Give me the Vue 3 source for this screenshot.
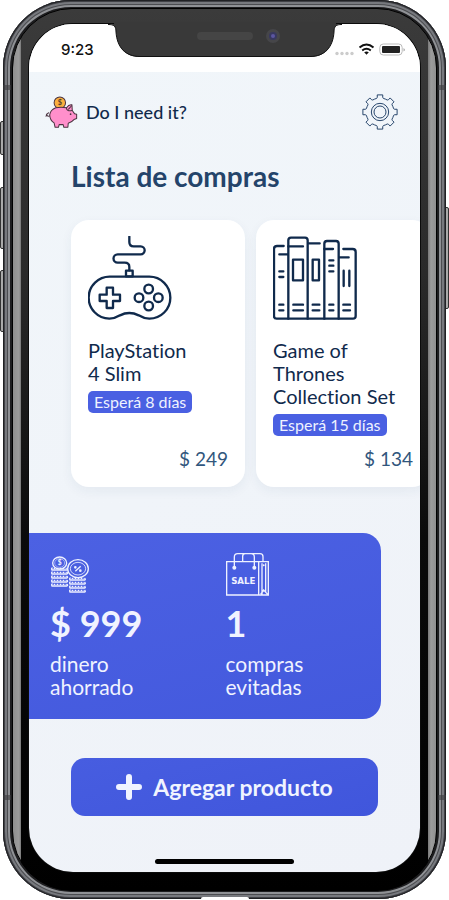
<script setup>
const products = [
  { id: 1, lines: ['PlayStation', '4 Slim'], wait: 8, price: 249, icon: 'gamepad' },
  { id: 2, lines: ['Game of', 'Thrones', 'Collection Set'], wait: 15, price: 134, icon: 'books' },
]

function gearPath(teeth, outer, inner) {
  const step = (Math.PI * 2) / teeth
  const at = (r, a) => `${(r * Math.cos(a)).toFixed(1)} ${(r * Math.sin(a)).toFixed(1)}`
  let d = ''
  for (let i = 0; i < teeth; i++) {
    const a = i * step
    d += `${i ? 'L' : 'M'}${at(inner, a - 0.24)} L${at(inner + 3, a - 0.18)} L${at(outer, a - 0.16)} `
    d += `L${at(outer, a + 0.16)} L${at(inner + 3, a + 0.18)} L${at(inner, a + 0.24)} `
    d += `A${inner} ${inner} 0 0 1 ${at(inner, a + step - 0.24)} `
  }
  return d + 'Z'
}
const gear = gearPath(8, 52, 42)
const leftStack = [119, 131, 143, 155, 167]
const rightStack = [149, 161, 173, 185]
</script>

<template>
  <div class="device">
    <i class="key mute"></i>
    <i class="key up"></i>
    <i class="key down"></i>
    <i class="key power"></i>
    <div class="frame">
      <i class="seam left top-seam"></i>
      <i class="seam right top-seam"></i>
      <i class="seam left low-seam"></i>
      <i class="seam right low-seam"></i>
      <div class="bezel">
        <svg class="notch" viewBox="0 0 234 33" aria-hidden="true">
          <path d="M0 0C6 0 8 2 8 8C9 23 17 33 32 33H202C217 33 225 23 226 8C226 2 228 0 234 0Z" fill="#393939" />
          <path d="M0 .5C6 .5 8 2 8 8C9 23 17 32.5 32 32.5H202C217 32.5 225 23 226 8C226 2 228 .5 234 .5" fill="none" stroke="#111" />
          <rect x="6" y="-2" width="222" height="4" fill="#393939" />
          <rect x="89" y="8" width="56" height="8" rx="4" fill="#454545" />
          <circle cx="165" cy="12" r="7" fill="#464649" />
          <circle cx="165" cy="12" r="4" fill="#38385f" />
          <circle cx="165" cy="12" r="2" fill="#5b56a0" />
        </svg>
        <main class="screen">
          <div class="status">
            <span>9:23</span>
            <svg class="signals" viewBox="0 0 70 14" aria-hidden="true">
              <g fill="#ccc">
                <circle cx="2" cy="10.500" r="1.700" /><circle cx="7" cy="10.500" r="1.700" />
                <circle cx="12" cy="10.500" r="1.700" /><circle cx="17" cy="10.500" r="1.700" />
              </g>
              <g fill="none" stroke="#111" stroke-width="2">
                <path d="M24.5 4.600Q31.500 -1.500 38.500 4.600" />
                <path d="M27.200 7.500Q31.500 4 35.800 7.500" />
              </g>
              <path d="M29.200 9.300Q31.500 7.700 33.800 9.300L31.500 11.700Z" fill="#111" />
              <rect x="44.800" y="1" width="22.400" height="11" rx="3.500" fill="#fff" stroke="#bbb" />
              <rect x="47" y="3" width="18" height="7" rx="1" fill="#222" />
              <path d="M68.500 5v3.500q1.500-.8 1.500-1.700t-1.500-1.800" fill="#aaa" />
            </svg>
          </div>

          <header class="top">
            <svg class="pig" viewBox="136 286 98 98" aria-hidden="true">
              <g stroke="#4a3340" stroke-width="3" stroke-linejoin="round" stroke-linecap="round">
                <circle cx="180" cy="306" r="17" fill="#fbb03f" />
                <path d="M150 345Q143 348 140 340M139 346Q142 338 147 336" fill="none" />
                <path d="M200 321Q207 310 216 312L217 329L224 339L230 340V353L222 356Q215 364 205 367L204 379H192L190 371H178L176 379H166L163 366Q150 358 150 342Q152 327 168 321Q184 318 200 321Z" fill="#ff8fcb" />
                <path d="M199 321Q202 333 216 329M206 325L215 315" fill="none" />
              </g>
              <circle cx="212" cy="340" r="2.500" fill="#4a3340" />
              <text x="180" y="314" text-anchor="middle" font-family="Lato, sans-serif" font-size="22" font-weight="700" fill="#59412d">$</text>
            </svg>
            <span class="brand">Do I need it?</span>
            <button class="settings" type="button" aria-label="Ajustes">
              <svg viewBox="-54 -54 108 108" fill="none" stroke="#27456b" stroke-width="3" stroke-linejoin="round">
                <path :d="gear" /><circle r="26" /><circle r="18" />
              </svg>
            </button>
          </header>

          <h1>Lista de compras</h1>

          <section class="list" aria-label="Lista de compras">
            <article v-for="p in products" :key="p.id" class="card">
              <svg v-if="p.icon === 'gamepad'" class="art" viewBox="54 48 252 252" aria-hidden="true">
                <path d="M178 50V66Q178 79 191 79H212A12 12 0 0 1 212 103H143A12.500 12.500 0 0 0 143 128H164Q178 128 178 141V151" />
                <rect x="168" y="152" width="20" height="17" />
                <path d="M120 170H238A63 63 0 0 1 238 296Q222 296 206 286Q178 272 150 286Q134 296 118 296A63 63 0 0 1 120 170Z" />
                <path d="M110 203H129V224H150V243H129V264H110V243H89V224H110Z" />
                <circle cx="236" cy="207" r="13" /><circle cx="207" cy="233" r="13" />
                <circle cx="265" cy="233" r="13" /><circle cx="236" cy="258" r="13" />
              </svg>
              <svg v-else class="art" viewBox="68 48 252 252" aria-hidden="true">
                <path d="M100 78H80Q71 78 71 87V288Q71 296 79 296H308Q316 296 316 288V96Q316 87 307 87H279" />
                <path d="M114 296V61Q114 53 122 53H164Q172 53 172 61V296M222 296V71Q222 63 230 63H257Q265 63 265 71V296" />
                <path d="M114 79H158M87 103H112M174 70H208M222 87H248M267 112H295" />
                <rect x="128" y="119" width="30" height="62" /><rect x="187" y="119" width="19" height="62" />
                <path d="M280 152V198M297 152V198M237 121H249M237 137H249M237 154H249M87 154H99M87 171H99" />
                <path d="M87 254H99M87 271H99M129 254H158M129 271H158M187 254H207M187 271H207M237 254H249M237 271H249M279 254H299M279 271H299" />
              </svg>
              <h2><span v-for="line in p.lines" :key="line">{{ line }}</span></h2>
              <p class="wait">Esperá {{ p.wait }} días</p>
              <p class="price">$ {{ p.price }}</p>
            </article>
          </section>

          <section class="stats">
            <div class="stat">
              <svg class="stat-icon" viewBox="63 66 132 135" aria-hidden="true">
                <g fill="none" stroke="#eef1ff" stroke-width="4">
                  <ellipse cx="92" cy="99" rx="21" ry="18" />
                  <ellipse cx="92" cy="99" rx="15" ry="13" stroke-width="1.500" />
                  <g v-for="y in leftStack" :key="y">
                    <path :d="`M71 ${y - 5}Q66 ${y - 5} 69 ${y + 1}H113Q118 ${y + 1} 114 ${y - 5}`" />
                    <path :d="`M74 ${y - 4}H113`" stroke-dasharray="5 4" />
                  </g>
                  <g v-for="y in rightStack" :key="y">
                    <path :d="`M125 ${y - 5}Q120 ${y - 5} 123 ${y + 1}H167Q171 ${y + 1} 167 ${y - 5}`" />
                    <path :d="`M128 ${y - 4}H166`" stroke-dasharray="5 4" />
                  </g>
                  <ellipse cx="147" cy="116" rx="31" ry="27" fill="#4a5fe0" />
                  <ellipse cx="147" cy="116" rx="23" ry="19" stroke-width="2.500" />
                  <path d="M139 124L155 109" />
                  <circle cx="139" cy="112" r="2" /><circle cx="154" cy="122" r="2" />
                </g>
                <text x="92" y="106" text-anchor="middle" font-family="Lato, sans-serif" font-size="20" font-weight="900" fill="#eef1ff">$</text>
              </svg>
              <strong>$ 999</strong>
              <p>dinero<br />ahorrado</p>
            </div>
            <div class="stat">
              <svg class="stat-icon" viewBox="45 66 132 135" aria-hidden="true">
                <g fill="none" stroke="#eef1ff" stroke-width="4">
                  <path d="M47 95H172V195H47ZM143 95V195M153 195V100M164 100V186M153 185L158 180L170 193M149 192L158 182" />
                  <path d="M70 109V81Q70 71 80 71H120Q130 71 130 81V109M95 95V79Q95 71 103 71H147Q156 71 156 80V95" />
                </g>
                <g fill="#eef1ff"><circle cx="70" cy="113" r="6" /><circle cx="130" cy="113" r="6" /><circle cx="158" cy="106" r="3" /></g>
                <text x="97" y="161" text-anchor="middle" font-family="'DejaVu Sans', sans-serif" font-size="26" font-weight="700" fill="#eef1ff">SALE</text>
              </svg>
              <strong>1</strong>
              <p>compras<br />evitadas</p>
            </div>
          </section>

          <button class="add" type="button">
            <svg viewBox="0 0 26 26" aria-hidden="true"><path d="M13 3V23M3 13H23" stroke="#f0f4ff" stroke-width="6" stroke-linecap="round" /></svg>
            Agregar producto
          </button>
          <i class="home"></i>
        </main>
      </div>
    </div>
    <i class="port"></i>
  </div>
</template>

<style>
body { margin: 0; background: #fff; }
</style>

<style scoped>
* { box-sizing: border-box; }
h1, h2, p { margin: 0; font-weight: 400; }
button { border: 0; padding: 0; font: inherit; cursor: pointer; }
svg { display: block; flex: none; }

.device {
  position: relative;
  display: flex;
  min-height: 100vh;
  padding: 0 3px 1px;
  font-family: Lato, "Noto Sans", sans-serif;
  font-variant-ligatures: none;
  color: #102a4c;
}
.frame {
  position: relative;
  flex: 1;
  min-width: 0;
  display: flex;
  padding: 8px 9px;
  border-radius: 68px;
  background: #1d1d1f;
  box-shadow:
    inset 0 0 0 1px #202124,
    inset 0 0 0 2px #404146,
    inset 0 0 0 4px #77797e,
    inset 0 0 0 5px #4b4c50,
    inset 0 0 0 7px #8f9195;
}
.bezel {
  position: relative;
  flex: 1;
  min-width: 0;
  display: flex;
  padding: 15px 16px 18px;
  border: 1px solid #000;
  border-radius: 60px;
  background:
    linear-gradient(90deg, #8f8f8f, #9c9c9c 6px, #777 8px, transparent 8px) left / 8px 100% no-repeat,
    linear-gradient(90deg, #777, #9c9c9c 3px, #8f8f8f 8px) right / 8px 100% no-repeat,
    linear-gradient(#3b3b3b, #2a2a2a 30%, #0a0a0a 60%, #000);
}
.screen {
  flex: 1;
  min-width: 0;
  display: flex;
  flex-direction: column;
  overflow: hidden;
  border-radius: 44px;
  background: linear-gradient(150deg, #f1f6fa, #eff2f8);
  box-shadow: 0 0 0 1px #0b0b0b;
}
.notch {
  position: absolute;
  top: 15px;
  left: 50%;
  width: 234px;
  height: 33px;
  overflow: visible;
  transform: translateX(-50%);
}
.seam {
  position: absolute;
  width: 8px;
  height: 5px;
  background: rgba(60, 60, 64, 0.6);
}
.left { left: 0; }
.right { right: 0; }
.top-seam { top: 85px; }
.low-seam { bottom: 99px; }
.key {
  position: absolute;
  left: 0;
  width: 5px;
  border: 1px solid #333;
  border-radius: 2px 0 0 2px;
  background: #aaa;
}
.mute { top: 121px; height: 34px; }
.up { top: 187px; height: 62px; }
.down { top: 270px; height: 62px; }
.power { top: 207px; left: auto; right: 0; height: 102px; border-radius: 0 2px 2px 0; }
.port {
  position: absolute;
  bottom: 0;
  left: 50%;
  width: 48px;
  height: 3px;
  margin-left: -24px;
  border-radius: 2px 2px 0 0;
  background: #fff;
}

.status {
  display: flex;
  justify-content: space-between;
  align-items: center;
  height: 48px;
  padding: 4px 15px 0 32px;
  background: #fff;
  color: #111;
  font: 500 15px/20px Inter, sans-serif;
}
.signals { width: 70px; height: 14px; }

.top { display: flex; align-items: center; padding: 22px 22px 0 16px; }
.pig { width: 33px; height: 33px; }
.brand { margin-left: 8px; font-size: 18px; line-height: 24px; font-weight: 500; }
.settings { margin-left: auto; background: none; }
.settings svg { width: 36px; height: 36px; }

h1 {
  margin: 30px 0 0 42px;
  font-size: 28px;
  line-height: 32px;
  font-weight: 700;
  color: #24446a;
}

.list {
  display: flex;
  gap: 11px;
  padding: 28px 0 28px 42px;
  overflow-x: auto;
  scrollbar-width: none;
}
.card {
  flex: none;
  display: flex;
  flex-direction: column;
  align-items: flex-start;
  width: 174px;
  min-height: 267px;
  padding: 16px 17px;
  border-radius: 18px;
  background: #fff;
  box-shadow: 0 4px 12px rgba(40, 70, 110, 0.06);
}
.art {
  width: 84px;
  height: 84px;
  fill: none;
  stroke: #102a4c;
  stroke-width: 7;
  stroke-linecap: round;
  stroke-linejoin: round;
}
h2 { margin-top: 19px; font-size: 20px; line-height: 23px; }
h2 span { display: block; white-space: nowrap; }
.wait {
  margin-top: 6px;
  padding: 0 6px;
  border-radius: 5px;
  background: #4a60e2;
  color: #eef2ff;
  font-size: 16px;
  line-height: 22px;
}
.price {
  margin-top: auto;
  align-self: flex-end;
  font-size: 19px;
  line-height: 25px;
  color: #31567d;
}

.stats {
  display: grid;
  grid-template-columns: 1fr 1fr;
  margin: 18px 39px 0 0;
  padding: 19px 0 21px 21px;
  column-gap: 20px;
  border-radius: 0 18px 18px 0;
  background: linear-gradient(165deg, #4c61e3, #4359dd);
  color: #f0f3ff;
}
.stat-icon { width: 44px; height: 45px; }
.stat strong { display: block; margin-top: 6px; font-size: 36px; line-height: 41px; font-weight: 700; }
.stat p { margin-top: 8px; font-size: 21px; line-height: 23px; }

.add {
  display: flex;
  justify-content: center;
  align-items: center;
  gap: 11px;
  height: 58px;
  margin: 39px 42px 0;
  border-radius: 14px;
  background: linear-gradient(165deg, #475de0, #4056dc);
  color: #f0f4ff;
  font-size: 23px;
  font-weight: 700;
}
.add svg { width: 26px; height: 26px; }
.home {
  align-self: center;
  width: 139px;
  height: 5px;
  margin: auto 0 8px;
  border-radius: 3px;
  background: #000;
}
</style>
